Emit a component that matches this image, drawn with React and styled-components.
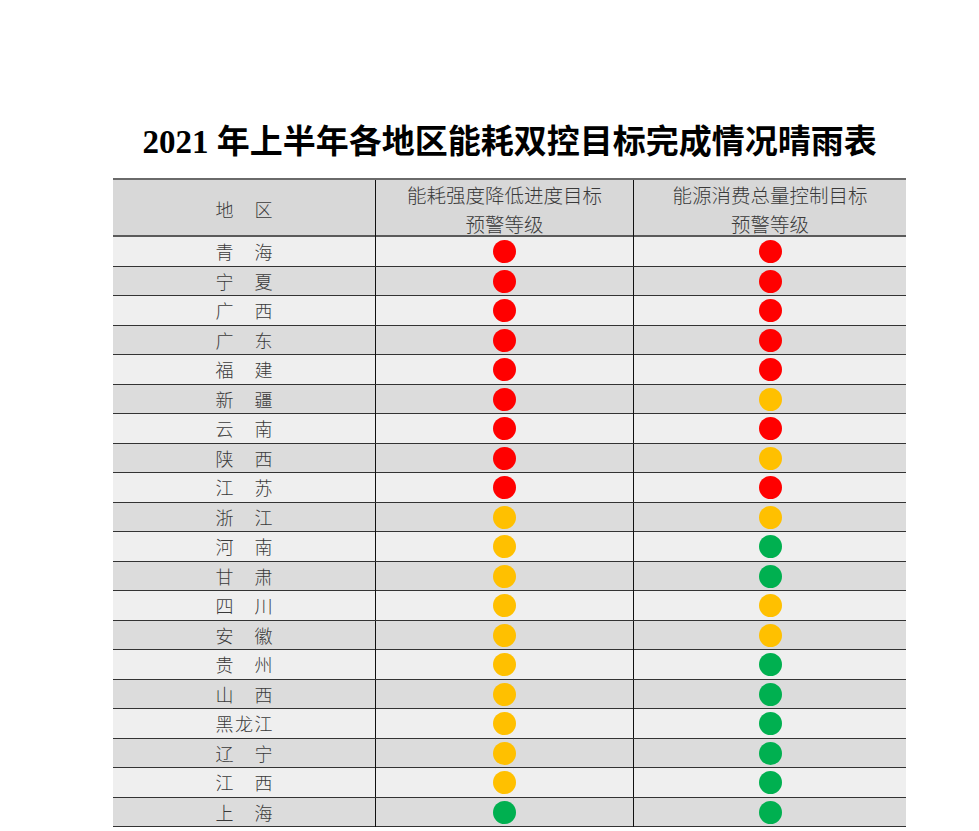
import React from "react";
import styled, { createGlobalStyle } from "styled-components";

const GlobalStyle = createGlobalStyle`
  body {
    margin: 0;
    background: #ffffff;
  }
`;

const Page = styled.div`
  padding: 122px 0 0 113px;
  width: 793px;
`;

const Title = styled.h1`
  margin: 0 0 16px;
  text-align: center;
  font-family: "Liberation Serif", "Noto Sans CJK SC", serif;
  font-weight: 700;
  font-size: 33px;
  line-height: 40px;
  color: #000;
  white-space: nowrap;
`;

const Table = styled.div`
  display: flex;
  flex-direction: column;
  font-family: "Noto Sans CJK SC", sans-serif;
  font-weight: 300;
  color: #3a3a3a;
  font-size: 18px;
`;

const Row = styled.div`
  display: grid;
  grid-template-columns: 262px 258px 273px;
  box-sizing: border-box;
  height: ${(p) => (p.$head ? "59px" : "29.5px")};
  background: ${(p) => (p.$head ? "#d8d8d8" : p.$odd ? "#efefef" : "#dcdcdc")};
  border-top: ${(p) => (p.$head ? "2px solid #6a6a6a" : "none")};
  border-bottom: ${(p) => (p.$head ? "2px solid #5a5a5a" : "1.5px solid #333")};
`;

const Cell = styled.div`
  display: flex;
  align-items: center;
  justify-content: center;
  text-align: center;
  line-height: 29px;
  font-size: ${(p) => (p.$head ? "19.5px" : "18px")};
  border-left: ${(p) => (p.$first ? "none" : "1px solid #111")};
`;

const Name = styled.span`
  display: flex;
  justify-content: space-between;
  width: 57px;
  font-size: 18px;
`;

const Dot = styled.span`
  display: block;
  width: 23px;
  height: 23px;
  border-radius: 50%;
  background: ${(p) => p.$color};
`;

const colors = { R: "#ff0000", Y: "#ffc000", G: "#00b050" };

const rows = [
  ["青海", "R", "R"],
  ["宁夏", "R", "R"],
  ["广西", "R", "R"],
  ["广东", "R", "R"],
  ["福建", "R", "R"],
  ["新疆", "R", "Y"],
  ["云南", "R", "R"],
  ["陕西", "R", "Y"],
  ["江苏", "R", "R"],
  ["浙江", "Y", "Y"],
  ["河南", "Y", "G"],
  ["甘肃", "Y", "G"],
  ["四川", "Y", "Y"],
  ["安徽", "Y", "Y"],
  ["贵州", "Y", "G"],
  ["山西", "Y", "G"],
  ["黑龙江", "Y", "G"],
  ["辽宁", "Y", "G"],
  ["江西", "Y", "G"],
  ["上海", "G", "G"],
];

export default function App() {
  return (
    <>
      <GlobalStyle />
      <Page>
        <Title>2021 年上半年各地区能耗双控目标完成情况晴雨表</Title>
        <Table>
          <Row $head>
            <Cell $first>
              <Name>
                {["地", "区"].map((c) => (
                  <span key={c}>{c}</span>
                ))}
              </Name>
            </Cell>
            <Cell $head>
              能耗强度降低进度目标
              <br />
              预警等级
            </Cell>
            <Cell $head>
              能源消费总量控制目标
              <br />
              预警等级
            </Cell>
          </Row>
          {rows.map(([name, a, b], i) => (
            <Row key={name} $odd={i % 2 === 0}>
              <Cell $first>
                <Name>
                  {name.split("").map((c, j) => (
                    <span key={j}>{c}</span>
                  ))}
                </Name>
              </Cell>
              <Cell>
                <Dot $color={colors[a]} />
              </Cell>
              <Cell>
                <Dot $color={colors[b]} />
              </Cell>
            </Row>
          ))}
        </Table>
      </Page>
    </>
  );
}
